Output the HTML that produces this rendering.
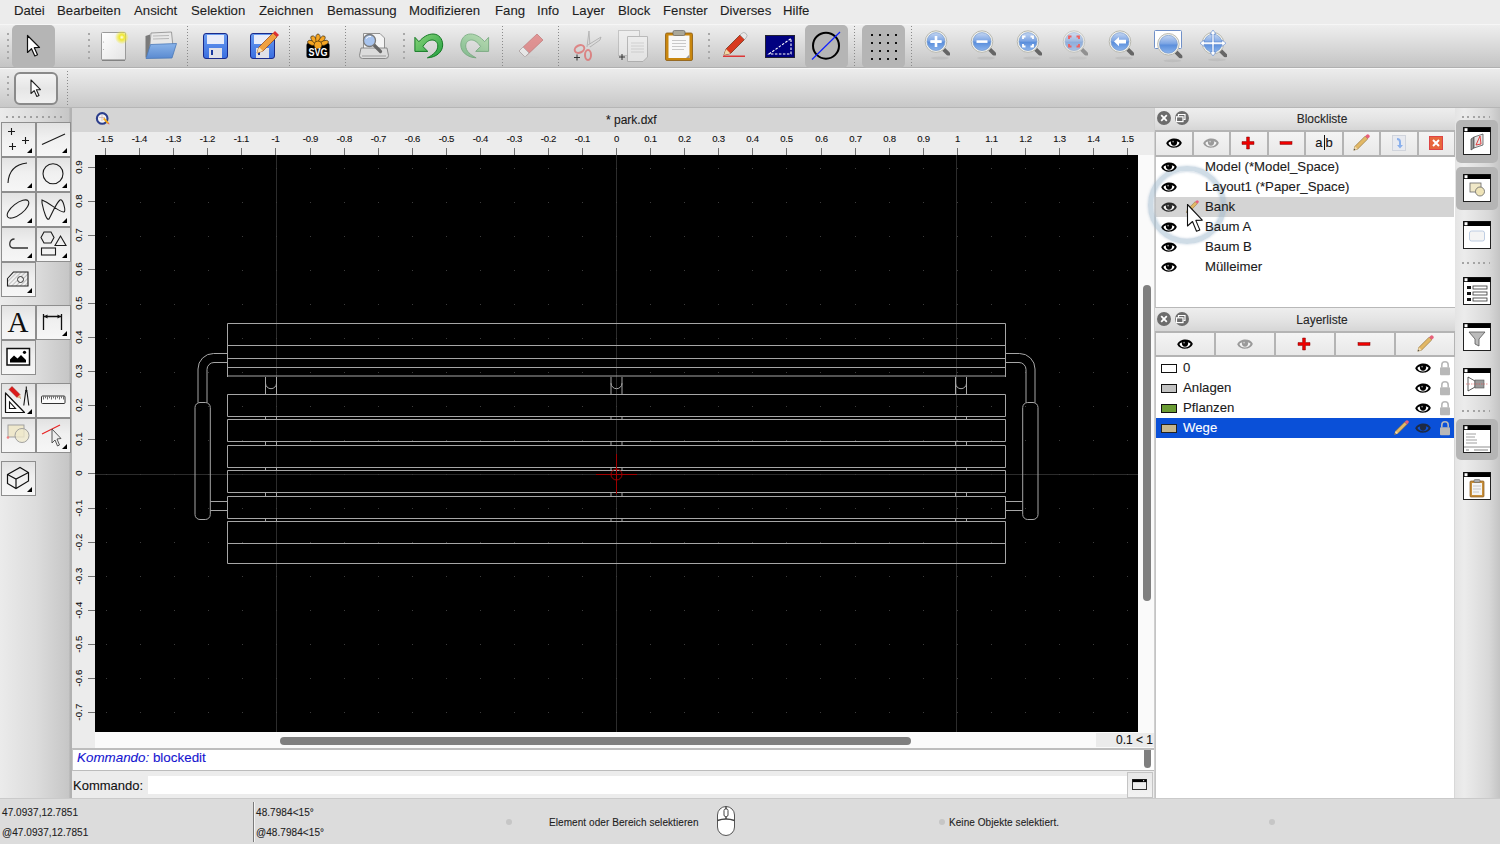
<!DOCTYPE html>
<html><head><meta charset="utf-8">
<style>
*{margin:0;padding:0;box-sizing:border-box}
html,body{width:1500px;height:844px;overflow:hidden;background:#ececec;font-family:"Liberation Sans",sans-serif;color:#222}
.a{position:absolute}
svg.a{overflow:visible}
#menu{left:0;top:0;width:1500px;height:24px;background:#ececec}
#menu span{position:absolute;top:3px;font-size:13.2px;color:#1e1e1e;line-height:15px}
#tb1{left:0;top:24px;width:1500px;height:44px;background:linear-gradient(#eeeeee,#e2e2e2 30%,#c4c4c4);border-top:1px solid #f6f6f6;border-bottom:1px solid #b0b0b0}
#tb2{left:0;top:68px;width:1500px;height:40px;background:linear-gradient(#ececec,#dedede 40%,#c8c8c8);border-top:1px solid #f8f8f8;border-bottom:1px solid #b6b6b6}
#tbox{left:0;top:108px;width:72px;height:690px;background:linear-gradient(90deg,#ebebeb,#dcdcdc 50%,#c6c6c6 96%,#b2b2b2 97%,#b2b2b2)}
#title{left:72px;top:108px;width:1082px;height:24px;background:#d5d5d5}
#title span{position:absolute;left:534px;top:5px;font-size:12px;color:#1a1a1a}
#rtop{left:72px;top:132px;width:1082px;height:23px;background:#ececec}
#rleft{left:72px;top:155px;width:23px;height:593px;background:#ececec}
#vsb{left:1138px;top:155px;width:17px;height:593px;background:#fafafa}
#hsb{left:95px;top:732px;width:1060px;height:16px;background:#fafafa}
#hist{left:72px;top:748px;width:1082px;height:23px;background:#fff;border-top:2px solid #bdbdbd;border-left:1px solid #c8c8c8;border-bottom:1px solid #bcbcbc}
#cmd{left:72px;top:771px;width:1083px;height:27px;background:#ececec}
#status{left:0;top:798px;width:1500px;height:46px;background:#dcdcdc;border-top:1px solid #cacaca}
#dock{left:1154px;top:108px;width:302px;height:690px;background:#ececec;border-left:1px solid #cfcfcf}
#rtb{left:1455px;top:108px;width:45px;height:690px;background:linear-gradient(90deg,#e4e4e4,#ececec 20%,#d8d8d8 75%,#c4c4c4)}
.tk{background:#707070}
.rl{font-size:9.6px;color:#111;text-align:center;line-height:10px;letter-spacing:-0.3px}
.rv{letter-spacing:0.1px}
.rv{transform:rotate(-90deg)}
.dots{border-left:2px dotted #9a9a9a}
.hdots{border-top:2px dotted #9a9a9a}
.sep{border-left:1px dotted #8a8a8a}
.tbb{background:#b5b5b5;border-radius:5px}
.bt{background:linear-gradient(#e2e2e2,#f0f0f0 45%,#f6f6f6);border:1px solid #8e8e8e}
.ptitle{background:linear-gradient(#eeeeee,#e4e4e4 50%,#d6d6d6)}
.pt{font-size:12px;color:#262626;text-align:center}
.cb{width:14px;height:14px;border-radius:7px;background:#6c6c6c}
.pb{background:linear-gradient(#f4f4f4,#e8e8e8);border:2px solid #b4b4b4;border-right-width:1px;border-left-width:1px}
.li{font-size:13.2px;color:#1a1a1a;line-height:16px}
.st{font-size:10px;color:#1e1e1e;line-height:12px;letter-spacing:0.07px}
body *{-webkit-text-stroke:0.1px currentColor}
</style></head><body>
<div id="menu" class="a">
<span style="left:14px">Datei</span><span style="left:57px">Bearbeiten</span><span style="left:134px">Ansicht</span><span style="left:191px">Selektion</span><span style="left:259px">Zeichnen</span><span style="left:327px">Bemassung</span><span style="left:409px">Modifizieren</span><span style="left:495px">Fang</span><span style="left:537px">Info</span><span style="left:572px">Layer</span><span style="left:618px">Block</span><span style="left:663px">Fenster</span><span style="left:720px">Diverses</span><span style="left:783px">Hilfe</span>
</div>
<div id="tb1" class="a"></div>
<div class="a" style="left:7px;top:33px;width:2px;height:26px;background:repeating-linear-gradient(#a8a8a8 0 2px,transparent 2px 6px)"></div>
<div class="a tbb" style="left:12px;top:25px;width:43px;height:43px"></div>
<div class="a" style="left:88px;top:33px;width:2px;height:26px;background:repeating-linear-gradient(#a8a8a8 0 2px,transparent 2px 6px)"></div>
<div class="a" style="left:187px;top:26px;width:1px;height:40px;background:repeating-linear-gradient(#8a8a8a 0 1px,transparent 1px 3px)"></div>
<div class="a" style="left:289px;top:26px;width:1px;height:40px;background:repeating-linear-gradient(#8a8a8a 0 1px,transparent 1px 3px)"></div>
<div class="a" style="left:345px;top:26px;width:1px;height:40px;background:repeating-linear-gradient(#8a8a8a 0 1px,transparent 1px 3px)"></div>
<div class="a" style="left:403px;top:33px;width:2px;height:26px;background:repeating-linear-gradient(#a8a8a8 0 2px,transparent 2px 6px)"></div>
<div class="a" style="left:502px;top:26px;width:1px;height:40px;background:repeating-linear-gradient(#8a8a8a 0 1px,transparent 1px 3px)"></div>
<div class="a" style="left:558px;top:26px;width:1px;height:40px;background:repeating-linear-gradient(#8a8a8a 0 1px,transparent 1px 3px)"></div>
<div class="a" style="left:708px;top:33px;width:2px;height:26px;background:repeating-linear-gradient(#a8a8a8 0 2px,transparent 2px 6px)"></div>
<div class="a" style="left:854px;top:26px;width:1px;height:40px;background:repeating-linear-gradient(#8a8a8a 0 1px,transparent 1px 3px)"></div>
<div class="a" style="left:911px;top:26px;width:1px;height:40px;background:repeating-linear-gradient(#8a8a8a 0 1px,transparent 1px 3px)"></div>
<div class="a tbb" style="left:805px;top:25px;width:43px;height:43px"></div>
<div class="a tbb" style="left:862px;top:25px;width:43px;height:43px"></div>
<svg class="a" style="left:0;top:0" width="1260" height="108" viewBox="0 0 1260 108">
<defs>
<linearGradient id="lens" x1="0" y1="0" x2="0" y2="1"><stop offset="0" stop-color="#c4d6f2"/><stop offset="0.45" stop-color="#7ea6e4"/><stop offset="0.55" stop-color="#5b8fdc"/><stop offset="1" stop-color="#8cb4ec"/></linearGradient>
<linearGradient id="flop" x1="0" y1="0" x2="0" y2="1"><stop offset="0" stop-color="#6a9cf0"/><stop offset="1" stop-color="#3a6ee0"/></linearGradient>
<radialGradient id="glow"><stop offset="0" stop-color="#fffff0"/><stop offset="0.35" stop-color="#f0e830"/><stop offset="1" stop-color="#f0e830" stop-opacity="0"/></radialGradient>
<linearGradient id="grn" x1="0" y1="0" x2="1" y2="1"><stop offset="0" stop-color="#8ad47a"/><stop offset="1" stop-color="#22a040"/></linearGradient>
<symbol id="mag" viewBox="-14 -14 28 28">
<path d="M7 7 L12.5 12.5" stroke="#666" stroke-width="4" stroke-linecap="round"/>
<circle cx="0" cy="0" r="10.8" fill="#f4f4ee" stroke="#b8b8b0" stroke-width="1"/>
<circle cx="0" cy="0" r="9" fill="url(#lens)" stroke="#6c90c8" stroke-width="0.6"/>
</symbol>
</defs>
<path transform="translate(27.5,35.5)" d="M0 0 L0 17 L4 13.2 L7.3 20.5 L10 19.3 L6.8 12.2 L12 12 Z" fill="#fff" stroke="#111" stroke-width="1.2" stroke-linejoin="round"/>
<defs><linearGradient id="paper" x1="0" y1="0" x2="1" y2="1"><stop offset="0" stop-color="#ffffff"/><stop offset="1" stop-color="#e4e4e4"/></linearGradient></defs>
<rect x="101.5" y="32.5" width="24" height="27.5" rx="1" fill="url(#paper)" stroke="#9a9a9a" stroke-width="1"/><line x1="102" y1="60.3" x2="125" y2="60.3" stroke="#777" stroke-width="1"/>
<circle cx="103.5" cy="42" r="0.6" fill="#aaa"/><circle cx="103.5" cy="49.5" r="0.6" fill="#aaa"/>
<circle cx="121.8" cy="37.3" r="7" fill="url(#glow)"/>
<path d="M145.5 36 L150 34.5 L150 56 L145.5 57.5Z" fill="#7a7a7a"/>
<path d="M151 33 L171.5 32 L173 47 L149.5 50Z" fill="#e8e8e8" stroke="#8a8a8a" stroke-width="0.8"/>
<g stroke="#aaa" stroke-width="0.8"><line x1="153" y1="36" x2="169" y2="35.5"/><line x1="153" y1="39" x2="169" y2="38.5"/></g>
<defs><linearGradient id="fold" x1="0" y1="0" x2="0" y2="1"><stop offset="0" stop-color="#8ab4ea"/><stop offset="1" stop-color="#5a8ad0"/></linearGradient></defs>
<path d="M150.5 44.5 L176.5 43.5 L172 58 L146 58.5Z" fill="url(#fold)" stroke="#4a78b8" stroke-width="0.8"/>
<rect x="203.5" y="33.5" width="24" height="25" rx="2.5" fill="url(#flop)" stroke="#1a2a8a" stroke-width="1"/><rect x="207" y="35" width="17" height="9" fill="#e8ecfa"/><rect x="209" y="48" width="13" height="10" fill="#e0e0e8"/><rect x="211" y="50" width="2" height="5" fill="#1a3aa0"/>
<rect x="250.5" y="33.5" width="24" height="25" rx="2.5" fill="url(#flop)" stroke="#1a2a8a" stroke-width="1"/><rect x="254" y="35" width="17" height="9" fill="#e8ecfa"/><rect x="256" y="48" width="13" height="10" fill="#e0e0e8"/><rect x="258" y="50" width="2" height="5" fill="#1a3aa0"/>
<path d="M257 53 L259 47 L273 33 L277 37 L263 51Z" fill="#f0a040" stroke="#904010" stroke-width="0.7"/><path d="M273 33 L275 31 L279 35 L277 37Z" fill="#e03030"/><path d="M257 53 L259 47 L263 51Z" fill="#f8e0b0"/>
<path d="M306.5 45 Q306.5 43 308.5 43 L327.5 43 Q329.5 43 329.5 45 L329.5 56 Q329.5 58 327.5 58 L308.5 58 Q306.5 58 306.5 56Z" fill="#000"/>
<g fill="#f6a623" stroke="#000" stroke-width="0.5"><ellipse cx="318" cy="38.5" rx="2.3" ry="4.5" transform="rotate(-72 318 45)"/><ellipse cx="318" cy="38.5" rx="2.3" ry="4.5" transform="rotate(-36 318 45)"/><ellipse cx="318" cy="38.5" rx="2.3" ry="4.5" transform="rotate(0 318 45)"/><ellipse cx="318" cy="38.5" rx="2.3" ry="4.5" transform="rotate(36 318 45)"/><ellipse cx="318" cy="38.5" rx="2.3" ry="4.5" transform="rotate(72 318 45)"/><circle cx="318" cy="45" r="4"/></g>
<text x="318" y="55.5" font-family="Liberation Sans" font-weight="bold" font-size="11" text-anchor="middle" fill="#fff" textLength="19" lengthAdjust="spacingAndGlyphs">SVG</text>
<path d="M363.5 33.5 L380 33.5 L384.5 38 L384.5 49 L363.5 49Z" fill="#f4f4f4" stroke="#888" stroke-width="0.9"/>
<path d="M361 48 L387 48 L388.5 55.5 Q388.5 58.5 385.5 58.5 L362.5 58.5 Q359.5 58.5 359.5 55.5Z" fill="#dcdcdc" stroke="#808080" stroke-width="0.9"/><rect x="362" y="55" width="24" height="2" fill="#bbb"/>
<path d="M373 44 L380.5 51.5" stroke="#666" stroke-width="3.2" stroke-linecap="round"/><circle cx="369.5" cy="40.5" r="6" fill="#a8c4ee" stroke="#7a7a7a" stroke-width="1.3"/><path d="M366 38.5 Q368 36 371 36.5" stroke="#fff" stroke-width="1" fill="none"/>
<path d="M414.9 37.3 L418.9 41.7 C423 37 428 34 433 34 C439 34 442.7 39 442.7 45 C442.7 52 436 57.5 427.4 57.8 C433 55 437.8 51 437.8 46 C437.8 42 435 40 432 40 C429 40 426 42 422.9 46.5 L427.8 51.4 L414.9 51.4 Z" fill="url(#grn)" stroke="#157a25" stroke-width="1"/>
<path d="M414.9 37.3 L418.9 41.7 C423 37 428 34 433 34 C439 34 442.7 39 442.7 45 C442.7 52 436 57.5 427.4 57.8 C433 55 437.8 51 437.8 46 C437.8 42 435 40 432 40 C429 40 426 42 422.9 46.5 L427.8 51.4 L414.9 51.4 Z" fill="url(#grn)" stroke="#157a25" stroke-width="1" opacity="0.45" transform="translate(903.5,0) scale(-1,1)"/>
<g opacity="0.6"><path d="M519 51 L537 34 L543 40 L525 57Z" fill="#e06060" stroke="#b04040" stroke-width="0.8"/><path d="M522 48 L540 31" stroke="#fff" stroke-width="2" opacity="0"/><path d="M519 51 L523 47 L529 53 L525 57Z" fill="#f4f4f4" stroke="#888" stroke-width="0.7"/><ellipse cx="530" cy="57.5" rx="9" ry="1.2" fill="#ccc"/></g>
<g opacity="0.6"><path d="M587 47 L589 31 L590 47" fill="#ddd" stroke="#888" stroke-width="0.8"/><path d="M588 45 L601 37 L600 40 L590 47" fill="#ddd" stroke="#888" stroke-width="0.8"/><ellipse cx="579.5" cy="49" rx="5" ry="3.6" fill="none" stroke="#e05050" stroke-width="2" transform="rotate(-25 579.5 49)"/><ellipse cx="588" cy="55" rx="3" ry="5" fill="none" stroke="#e05050" stroke-width="2"/></g>
<path d="M574 57.5 H580 M577 54.5 V60.5" stroke="#333" stroke-width="1"/>
<g opacity="0.55"><rect x="618.5" y="30.5" width="21" height="25" fill="#f4f4f4" stroke="#aaa"/><path d="M627.5 36.5 L647.5 36.5 L647.5 57 L643 61.5 L627.5 61.5Z" fill="#f6f6f6" stroke="#999"/><g stroke="#bbb" stroke-width="0.8"><line x1="631" y1="43" x2="644" y2="43"/><line x1="631" y1="46" x2="644" y2="46"/><line x1="631" y1="49" x2="644" y2="49"/><line x1="631" y1="52" x2="644" y2="52"/></g></g>
<path d="M619 57 H625 M622 54 V60" stroke="#333" stroke-width="1"/>
<rect x="665.5" y="33" width="27" height="27.5" rx="1.5" fill="#c8860e" stroke="#8a5a10" stroke-width="0.8"/><rect x="668.5" y="35.5" width="21" height="22.5" fill="#f8f8f8"/><path d="M686 58 L689.5 54.5 L689.5 58Z" fill="#999"/>
<rect x="673" y="30.5" width="12" height="5" rx="1.5" fill="#aaa89a" stroke="#666" stroke-width="0.7"/>
<g stroke="#bbb" stroke-width="0.8"><line x1="672" y1="40.5" x2="686" y2="40.5"/><line x1="672" y1="43.5" x2="686" y2="43.5"/><line x1="672" y1="46.5" x2="686" y2="46.5"/><line x1="672" y1="49.5" x2="684" y2="49.5"/></g>
<path d="M724 55 L726 49 L740 35 L744.5 39.5 L730.5 53.5Z" fill="#d83a20" stroke="#6a2a10" stroke-width="0.7"/><path d="M740 35 L741.5 33.5 A2.5 2.5 0 0 1 746 38 L744.5 39.5Z" fill="#e8e8e8" stroke="#888" stroke-width="0.5"/><path d="M724 55 L726 49 L730.5 53.5Z" fill="#f0d8a8"/><path d="M723 56.2 H745" stroke="#e01010" stroke-width="1.2"/>
<rect x="765.5" y="35.5" width="29" height="22" fill="#000080" stroke="#223" stroke-width="1"/><path d="M769 54 L791 38.5 L791 54Z" fill="none" stroke="#fff" stroke-width="1.1" stroke-dasharray="2.5 1.5"/>
<circle cx="826" cy="45.7" r="13" fill="none" stroke="#000" stroke-width="2"/><line x1="812" y1="59.5" x2="840" y2="32" stroke="#1020ff" stroke-width="1.2"/>
<g fill="#111"><rect x="871" y="34" width="2" height="2"/><rect x="871" y="42" width="2" height="2"/><rect x="871" y="50" width="2" height="2"/><rect x="871" y="58" width="2" height="2"/><rect x="879" y="34" width="2" height="2"/><rect x="879" y="42" width="2" height="2"/><rect x="879" y="50" width="2" height="2"/><rect x="879" y="58" width="2" height="2"/><rect x="887" y="34" width="2" height="2"/><rect x="887" y="42" width="2" height="2"/><rect x="887" y="50" width="2" height="2"/><rect x="887" y="58" width="2" height="2"/><rect x="895" y="34" width="2" height="2"/><rect x="895" y="42" width="2" height="2"/><rect x="895" y="50" width="2" height="2"/><rect x="895" y="58" width="2" height="2"/></g>
<ellipse cx="940" cy="58.1" rx="9" ry="1.5" fill="#000" opacity="0.06"/>
<use href="#mag" x="922" y="27.6" width="28" height="28"/>
<path d="M936 36 V47 M930.5 41.6 H941.5" stroke="#fff" stroke-width="2.6"/><path d="M936 36 V47 M930.5 41.6 H941.5" stroke="#fff" stroke-width="2"/>
<ellipse cx="986" cy="58.1" rx="9" ry="1.5" fill="#000" opacity="0.06"/>
<use href="#mag" x="968" y="27.6" width="28" height="28"/>
<path d="M976.5 41.6 H987.5" stroke="#fff" stroke-width="2.6"/>
<ellipse cx="1032" cy="58.1" rx="9" ry="1.5" fill="#000" opacity="0.06"/>
<use href="#mag" x="1014" y="27.6" width="28" height="28"/>
<path d="M1023 39 V36.5 H1025.5 M1030.5 36.5 H1033 V39 M1033 44 V46.5 H1030.5 M1025.5 46.5 H1023 V44" stroke="#fff" stroke-width="1.8" fill="none"/>
<g opacity="0.6">
<ellipse cx="1078" cy="58.1" rx="9" ry="1.5" fill="#000" opacity="0.06"/>
<use href="#mag" x="1060" y="27.6" width="28" height="28"/>
</g><path d="M1069 39 V36.5 H1071.5 M1076.5 36.5 H1079 V39 M1079 44 V46.5 H1076.5 M1071.5 46.5 H1069 V44" stroke="#f06060" stroke-width="1.8" fill="none"/>
<ellipse cx="1124" cy="58.1" rx="9" ry="1.5" fill="#000" opacity="0.06"/>
<use href="#mag" x="1106" y="27.6" width="28" height="28"/>
<path d="M1114 41.6 L1119 37 L1119 39.8 L1126 39.8 L1126 43.4 L1119 43.4 L1119 46.2Z" fill="#fff"/>
<rect x="1154.5" y="30.5" width="27" height="18" rx="1" fill="#fff" stroke="#7090c8" stroke-width="1"/>
<ellipse cx="1172.4" cy="60.8" rx="9" ry="1.5" fill="#000" opacity="0.06"/>
<use href="#mag" x="1154.4" y="30.299999999999997" width="28" height="28"/>
<ellipse cx="1217" cy="59.7" rx="9" ry="1.5" fill="#000" opacity="0.06"/>
<use href="#mag" x="1199" y="29.200000000000003" width="28" height="28"/>
<path d="M1213 30 L1216 34 L1214 34 L1214 42 L1222 42 L1222 40 L1226 43.2 L1222 46.4 L1222 44.4 L1214 44.4 L1214 52 L1216 52 L1213 56 L1210 52 L1212 52 L1212 44.4 L1204 44.4 L1204 46.4 L1200 43.2 L1204 40 L1204 42 L1212 42 L1212 34 L1210 34Z" fill="#fff" stroke="#5a86d0" stroke-width="0.6"/>
</svg>
<div id="tb2" class="a"></div>
<div class="a" style="left:7px;top:76px;width:2px;height:24px;background:repeating-linear-gradient(#a8a8a8 0 2px,transparent 2px 6px)"></div>
<div class="a" style="left:14px;top:72px;width:44px;height:33px;border:2px solid #8a8a8a;border-radius:6px;background:linear-gradient(#f4f4f4,#e6e6e6 50%,#f0f0f0)"></div>
<svg class="a" style="left:30px;top:79px" width="14" height="22" viewBox="0 0 14 22"><path d="M1 1 L1 14.5 L4.2 11.6 L6.8 17.5 L9 16.5 L6.4 10.8 L10.5 10.6Z" fill="#fff" stroke="#222" stroke-width="1.1" stroke-linejoin="round"/></svg>
<div class="a" style="left:67px;top:71px;width:1px;height:35px;background:repeating-linear-gradient(#8a8a8a 0 1px,transparent 1px 3px)"></div>
<div id="tbox" class="a"></div>
<div class="a" style="left:6px;top:116px;width:58px;height:2px;background:repeating-linear-gradient(90deg,#a0a0a0 0 2px,transparent 2px 6px)"></div>
<div class="a bt" style="left:1px;top:122px;width:35px;height:35px"></div>
<div class="a bt" style="left:36px;top:122px;width:35px;height:35px"></div>
<div class="a bt" style="left:1px;top:157px;width:35px;height:35px"></div>
<div class="a bt" style="left:36px;top:157px;width:35px;height:35px"></div>
<div class="a bt" style="left:1px;top:192px;width:35px;height:35px"></div>
<div class="a bt" style="left:36px;top:192px;width:35px;height:35px"></div>
<div class="a bt" style="left:1px;top:227px;width:35px;height:35px"></div>
<div class="a bt" style="left:36px;top:227px;width:35px;height:35px"></div>
<div class="a bt" style="left:1px;top:262px;width:35px;height:35px"></div>
<div class="a bt" style="left:1px;top:305px;width:35px;height:35px"></div>
<div class="a bt" style="left:36px;top:305px;width:35px;height:35px"></div>
<div class="a bt" style="left:1px;top:340px;width:35px;height:35px"></div>
<div class="a bt" style="left:1px;top:383px;width:35px;height:35px"></div>
<div class="a bt" style="left:36px;top:383px;width:35px;height:35px"></div>
<div class="a bt" style="left:1px;top:418px;width:35px;height:35px"></div>
<div class="a bt" style="left:36px;top:418px;width:35px;height:35px"></div>
<div class="a bt" style="left:1px;top:461px;width:35px;height:35px"></div>
<svg class="a" style="left:0;top:0" width="72" height="500" viewBox="0 0 72 500">
<g fill="none" stroke="#1a1a1a" stroke-width="1.1">
<path d="M8.0 131.5H15.0M11.5 128.0V135.0"/>
<path d="M22.0 140.5H29.0M25.5 137.0V144.0"/>
<path d="M9.0 146.5H16.0M12.5 143.0V150.0"/>
<path d="M42 144.5 L65 134"/>
<path d="M8 183 Q9 165 27 163"/>
<circle cx="53" cy="173.8" r="10"/>
<ellipse cx="18" cy="209" rx="13" ry="5.5" transform="rotate(-38 18 209)"/>
<path d="M42 203 C44 213 47 221 49 219 C53 212 56 203 60 200 C63 198 66 211 64 212 C60 213 50 203 42 200 Z" />
<path d="M14.5 239 C9 239 8 247 13 248 L28 248" stroke="#333" stroke-width="1.3"/>
<path d="M41 237.5 L44 232 L51 232 L54 237.5 L51 243 L44 243Z"/>
<path d="M55 245.5 L60.5 236 L66 245.5Z"/>
<rect x="41.5" y="248" width="14" height="7"/>
</g>
<defs><pattern id="hp" width="3" height="3" patternUnits="userSpaceOnUse" patternTransform="rotate(45)"><line x1="0" y1="0" x2="0" y2="3" stroke="#777" stroke-width="0.8"/></pattern></defs>
<path d="M7.5 278.5 L13.5 272 L28 272 L28 286 L7.5 286Z" fill="url(#hp)" stroke="#222" stroke-width="1.1"/>
<circle cx="20.5" cy="279.5" r="3" fill="#eee" stroke="#222" stroke-width="0.9"/>
<text x="18" y="332.3" font-family="Liberation Serif" font-size="29" text-anchor="middle" fill="#111">A</text>
<g stroke="#111" stroke-width="1.3" fill="none"><path d="M43.5 314 V330 M61.5 314 V330 M44 316.5 H61"/></g>
<path d="M44 316.5 L47.5 314.5 L47.5 318.5Z M61 316.5 L57.5 314.5 L57.5 318.5Z" fill="#111"/>
<rect x="7" y="348.5" width="22.5" height="16.5" fill="#fff" stroke="#111" stroke-width="1.5"/>
<path d="M10 362.5 L10 359.5 L14 355.5 L17.5 358.5 L21 355 L26 360 L26 362.5Z" fill="#000"/><circle cx="24.5" cy="352.3" r="1.6" fill="#000"/>
<path d="M5.5 393 L5.5 412.5 L24.5 412.5Z" fill="#fff" stroke="#111" stroke-width="1.2" stroke-linejoin="round"/><path d="M9.5 402 L9.5 408.5 L15.5 408.5Z" fill="none" stroke="#111" stroke-width="1.1"/>
<path d="M9 389.5 L12 386.5 L20 394.5 L17 397.5Z" fill="#dd1a1a" stroke="#8a1a10" stroke-width="0.5"/><path d="M17 397.5 L20 394.5 L21 398.5Z" fill="#e0b080"/><path d="M20.3 397.8 L21 398.5 L20 398.2Z" fill="#222"/>
<path d="M26.3 386.5 V390 M25.6 392 L23.8 405.5 M27 392 L28.8 405.5" stroke="#111" stroke-width="1.1" fill="none"/><circle cx="26.3" cy="391" r="1.3" fill="#111"/>
<rect x="41.5" y="396" width="23.5" height="7.5" rx="1" fill="#fafafa" stroke="#333" stroke-width="1"/>
<g stroke="#333" stroke-width="0.7"><line x1="43.5" y1="396.5" x2="43.5" y2="399.5"/><line x1="45.5" y1="396.5" x2="45.5" y2="398.3"/><line x1="47.5" y1="396.5" x2="47.5" y2="399.5"/><line x1="49.5" y1="396.5" x2="49.5" y2="398.3"/><line x1="51.5" y1="396.5" x2="51.5" y2="399.5"/><line x1="53.5" y1="396.5" x2="53.5" y2="398.3"/><line x1="55.5" y1="396.5" x2="55.5" y2="399.5"/><line x1="57.5" y1="396.5" x2="57.5" y2="398.3"/><line x1="59.5" y1="396.5" x2="59.5" y2="399.5"/><line x1="61.5" y1="396.5" x2="61.5" y2="398.3"/><line x1="63.5" y1="396.5" x2="63.5" y2="399.5"/></g>
<rect x="8" y="425" width="16" height="12" fill="#efe8cc" stroke="#999" stroke-width="0.9"/>
<circle cx="22" cy="435.5" r="7" fill="#efe8cc" fill-opacity="0.8" stroke="#999" stroke-width="0.9"/>
<circle cx="8" cy="437.5" r="1.3" fill="#f08080"/>
<line x1="42" y1="434" x2="60" y2="425" stroke="#e82020" stroke-width="1.2"/>
<path d="M52 429 L52 443 L55 440 L57.5 446 L59.5 445 L57 439 L61 438.5Z" fill="#eee" stroke="#444" stroke-width="0.9"/>
<g fill="none" stroke="#111" stroke-width="1.2"><path d="M7.5 474.5 L20 467.5 L28.5 472.5 L28.5 481 L16 488.5 L7.5 483.5Z M7.5 474.5 L16 479 L28.5 472.5 M16 479 V488.5"/></g>
<path d="M27 153 L32 153 L32 148Z" fill="#000"/>
<path d="M62 153 L67 153 L67 148Z" fill="#000"/>
<path d="M27 188 L32 188 L32 183Z" fill="#000"/>
<path d="M62 188 L67 188 L67 183Z" fill="#000"/>
<path d="M27 223 L32 223 L32 218Z" fill="#000"/>
<path d="M62 223 L67 223 L67 218Z" fill="#000"/>
<path d="M27 258 L32 258 L32 253Z" fill="#000"/>
<path d="M62 258 L67 258 L67 253Z" fill="#000"/>
<path d="M27 293 L32 293 L32 288Z" fill="#000"/>
<path d="M62 336 L67 336 L67 331Z" fill="#000"/>
<path d="M27 414 L32 414 L32 409Z" fill="#000"/>
<path d="M62 449 L67 449 L67 444Z" fill="#000"/>
<path d="M27 492 L32 492 L32 487Z" fill="#000"/>
</svg>
<div id="title" class="a"><span>* park.dxf</span></div>
<svg class="a" style="left:94px;top:110px" width="18" height="18" viewBox="94 110 18 18">
<circle cx="102.2" cy="118.4" r="5.3" fill="#f4f4f4" stroke="#2c3e8c" stroke-width="2.1"/>
<path d="M99 117.5 H105 M102 115 V121" stroke="#c8a0a0" stroke-width="0.6"/>
<path d="M103 119 L104.5 117.8 L108.8 122.6 L107.3 123.8Z" fill="#f4a818"/>
<path d="M107.3 123.8 L108.8 122.6 L109.6 124.6Z" fill="#e06868"/>
</svg>

<div id="rtop" class="a"></div>
<div id="rleft" class="a"></div>
<div id="vsb" class="a"></div>
<div id="hsb" class="a"></div>
<svg class="a" style="left:95px;top:155px" width="1043" height="577" viewBox="95 155 1043 577">
<rect x="95" y="155" width="1043" height="577" fill="#000"/>
<g stroke="#2c2c2c" stroke-width="1" shape-rendering="crispEdges">
<line x1="276.5" y1="155" x2="276.5" y2="732"/>
<line x1="616.5" y1="155" x2="616.5" y2="732"/>
<line x1="956.5" y1="155" x2="956.5" y2="732"/>
<line x1="95" y1="474.5" x2="1138" y2="474.5"/>
</g>
<g fill="#3c3c3c">
<rect x="106" y="168" width="1" height="1"/>
<rect x="106" y="202" width="1" height="1"/>
<rect x="106" y="236" width="1" height="1"/>
<rect x="106" y="270" width="1" height="1"/>
<rect x="106" y="304" width="1" height="1"/>
<rect x="106" y="338" width="1" height="1"/>
<rect x="106" y="372" width="1" height="1"/>
<rect x="106" y="406" width="1" height="1"/>
<rect x="106" y="440" width="1" height="1"/>
<rect x="106" y="474" width="1" height="1"/>
<rect x="106" y="508" width="1" height="1"/>
<rect x="106" y="542" width="1" height="1"/>
<rect x="106" y="576" width="1" height="1"/>
<rect x="106" y="610" width="1" height="1"/>
<rect x="106" y="644" width="1" height="1"/>
<rect x="106" y="678" width="1" height="1"/>
<rect x="106" y="712" width="1" height="1"/>
<rect x="140" y="168" width="1" height="1"/>
<rect x="140" y="202" width="1" height="1"/>
<rect x="140" y="236" width="1" height="1"/>
<rect x="140" y="270" width="1" height="1"/>
<rect x="140" y="304" width="1" height="1"/>
<rect x="140" y="338" width="1" height="1"/>
<rect x="140" y="372" width="1" height="1"/>
<rect x="140" y="406" width="1" height="1"/>
<rect x="140" y="440" width="1" height="1"/>
<rect x="140" y="474" width="1" height="1"/>
<rect x="140" y="508" width="1" height="1"/>
<rect x="140" y="542" width="1" height="1"/>
<rect x="140" y="576" width="1" height="1"/>
<rect x="140" y="610" width="1" height="1"/>
<rect x="140" y="644" width="1" height="1"/>
<rect x="140" y="678" width="1" height="1"/>
<rect x="140" y="712" width="1" height="1"/>
<rect x="174" y="168" width="1" height="1"/>
<rect x="174" y="202" width="1" height="1"/>
<rect x="174" y="236" width="1" height="1"/>
<rect x="174" y="270" width="1" height="1"/>
<rect x="174" y="304" width="1" height="1"/>
<rect x="174" y="338" width="1" height="1"/>
<rect x="174" y="372" width="1" height="1"/>
<rect x="174" y="406" width="1" height="1"/>
<rect x="174" y="440" width="1" height="1"/>
<rect x="174" y="474" width="1" height="1"/>
<rect x="174" y="508" width="1" height="1"/>
<rect x="174" y="542" width="1" height="1"/>
<rect x="174" y="576" width="1" height="1"/>
<rect x="174" y="610" width="1" height="1"/>
<rect x="174" y="644" width="1" height="1"/>
<rect x="174" y="678" width="1" height="1"/>
<rect x="174" y="712" width="1" height="1"/>
<rect x="208" y="168" width="1" height="1"/>
<rect x="208" y="202" width="1" height="1"/>
<rect x="208" y="236" width="1" height="1"/>
<rect x="208" y="270" width="1" height="1"/>
<rect x="208" y="304" width="1" height="1"/>
<rect x="208" y="338" width="1" height="1"/>
<rect x="208" y="372" width="1" height="1"/>
<rect x="208" y="406" width="1" height="1"/>
<rect x="208" y="440" width="1" height="1"/>
<rect x="208" y="474" width="1" height="1"/>
<rect x="208" y="508" width="1" height="1"/>
<rect x="208" y="542" width="1" height="1"/>
<rect x="208" y="576" width="1" height="1"/>
<rect x="208" y="610" width="1" height="1"/>
<rect x="208" y="644" width="1" height="1"/>
<rect x="208" y="678" width="1" height="1"/>
<rect x="208" y="712" width="1" height="1"/>
<rect x="242" y="168" width="1" height="1"/>
<rect x="242" y="202" width="1" height="1"/>
<rect x="242" y="236" width="1" height="1"/>
<rect x="242" y="270" width="1" height="1"/>
<rect x="242" y="304" width="1" height="1"/>
<rect x="242" y="338" width="1" height="1"/>
<rect x="242" y="372" width="1" height="1"/>
<rect x="242" y="406" width="1" height="1"/>
<rect x="242" y="440" width="1" height="1"/>
<rect x="242" y="474" width="1" height="1"/>
<rect x="242" y="508" width="1" height="1"/>
<rect x="242" y="542" width="1" height="1"/>
<rect x="242" y="576" width="1" height="1"/>
<rect x="242" y="610" width="1" height="1"/>
<rect x="242" y="644" width="1" height="1"/>
<rect x="242" y="678" width="1" height="1"/>
<rect x="242" y="712" width="1" height="1"/>
<rect x="276" y="168" width="1" height="1"/>
<rect x="276" y="202" width="1" height="1"/>
<rect x="276" y="236" width="1" height="1"/>
<rect x="276" y="270" width="1" height="1"/>
<rect x="276" y="304" width="1" height="1"/>
<rect x="276" y="338" width="1" height="1"/>
<rect x="276" y="372" width="1" height="1"/>
<rect x="276" y="406" width="1" height="1"/>
<rect x="276" y="440" width="1" height="1"/>
<rect x="276" y="474" width="1" height="1"/>
<rect x="276" y="508" width="1" height="1"/>
<rect x="276" y="542" width="1" height="1"/>
<rect x="276" y="576" width="1" height="1"/>
<rect x="276" y="610" width="1" height="1"/>
<rect x="276" y="644" width="1" height="1"/>
<rect x="276" y="678" width="1" height="1"/>
<rect x="276" y="712" width="1" height="1"/>
<rect x="310" y="168" width="1" height="1"/>
<rect x="310" y="202" width="1" height="1"/>
<rect x="310" y="236" width="1" height="1"/>
<rect x="310" y="270" width="1" height="1"/>
<rect x="310" y="304" width="1" height="1"/>
<rect x="310" y="338" width="1" height="1"/>
<rect x="310" y="372" width="1" height="1"/>
<rect x="310" y="406" width="1" height="1"/>
<rect x="310" y="440" width="1" height="1"/>
<rect x="310" y="474" width="1" height="1"/>
<rect x="310" y="508" width="1" height="1"/>
<rect x="310" y="542" width="1" height="1"/>
<rect x="310" y="576" width="1" height="1"/>
<rect x="310" y="610" width="1" height="1"/>
<rect x="310" y="644" width="1" height="1"/>
<rect x="310" y="678" width="1" height="1"/>
<rect x="310" y="712" width="1" height="1"/>
<rect x="344" y="168" width="1" height="1"/>
<rect x="344" y="202" width="1" height="1"/>
<rect x="344" y="236" width="1" height="1"/>
<rect x="344" y="270" width="1" height="1"/>
<rect x="344" y="304" width="1" height="1"/>
<rect x="344" y="338" width="1" height="1"/>
<rect x="344" y="372" width="1" height="1"/>
<rect x="344" y="406" width="1" height="1"/>
<rect x="344" y="440" width="1" height="1"/>
<rect x="344" y="474" width="1" height="1"/>
<rect x="344" y="508" width="1" height="1"/>
<rect x="344" y="542" width="1" height="1"/>
<rect x="344" y="576" width="1" height="1"/>
<rect x="344" y="610" width="1" height="1"/>
<rect x="344" y="644" width="1" height="1"/>
<rect x="344" y="678" width="1" height="1"/>
<rect x="344" y="712" width="1" height="1"/>
<rect x="378" y="168" width="1" height="1"/>
<rect x="378" y="202" width="1" height="1"/>
<rect x="378" y="236" width="1" height="1"/>
<rect x="378" y="270" width="1" height="1"/>
<rect x="378" y="304" width="1" height="1"/>
<rect x="378" y="338" width="1" height="1"/>
<rect x="378" y="372" width="1" height="1"/>
<rect x="378" y="406" width="1" height="1"/>
<rect x="378" y="440" width="1" height="1"/>
<rect x="378" y="474" width="1" height="1"/>
<rect x="378" y="508" width="1" height="1"/>
<rect x="378" y="542" width="1" height="1"/>
<rect x="378" y="576" width="1" height="1"/>
<rect x="378" y="610" width="1" height="1"/>
<rect x="378" y="644" width="1" height="1"/>
<rect x="378" y="678" width="1" height="1"/>
<rect x="378" y="712" width="1" height="1"/>
<rect x="412" y="168" width="1" height="1"/>
<rect x="412" y="202" width="1" height="1"/>
<rect x="412" y="236" width="1" height="1"/>
<rect x="412" y="270" width="1" height="1"/>
<rect x="412" y="304" width="1" height="1"/>
<rect x="412" y="338" width="1" height="1"/>
<rect x="412" y="372" width="1" height="1"/>
<rect x="412" y="406" width="1" height="1"/>
<rect x="412" y="440" width="1" height="1"/>
<rect x="412" y="474" width="1" height="1"/>
<rect x="412" y="508" width="1" height="1"/>
<rect x="412" y="542" width="1" height="1"/>
<rect x="412" y="576" width="1" height="1"/>
<rect x="412" y="610" width="1" height="1"/>
<rect x="412" y="644" width="1" height="1"/>
<rect x="412" y="678" width="1" height="1"/>
<rect x="412" y="712" width="1" height="1"/>
<rect x="446" y="168" width="1" height="1"/>
<rect x="446" y="202" width="1" height="1"/>
<rect x="446" y="236" width="1" height="1"/>
<rect x="446" y="270" width="1" height="1"/>
<rect x="446" y="304" width="1" height="1"/>
<rect x="446" y="338" width="1" height="1"/>
<rect x="446" y="372" width="1" height="1"/>
<rect x="446" y="406" width="1" height="1"/>
<rect x="446" y="440" width="1" height="1"/>
<rect x="446" y="474" width="1" height="1"/>
<rect x="446" y="508" width="1" height="1"/>
<rect x="446" y="542" width="1" height="1"/>
<rect x="446" y="576" width="1" height="1"/>
<rect x="446" y="610" width="1" height="1"/>
<rect x="446" y="644" width="1" height="1"/>
<rect x="446" y="678" width="1" height="1"/>
<rect x="446" y="712" width="1" height="1"/>
<rect x="480" y="168" width="1" height="1"/>
<rect x="480" y="202" width="1" height="1"/>
<rect x="480" y="236" width="1" height="1"/>
<rect x="480" y="270" width="1" height="1"/>
<rect x="480" y="304" width="1" height="1"/>
<rect x="480" y="338" width="1" height="1"/>
<rect x="480" y="372" width="1" height="1"/>
<rect x="480" y="406" width="1" height="1"/>
<rect x="480" y="440" width="1" height="1"/>
<rect x="480" y="474" width="1" height="1"/>
<rect x="480" y="508" width="1" height="1"/>
<rect x="480" y="542" width="1" height="1"/>
<rect x="480" y="576" width="1" height="1"/>
<rect x="480" y="610" width="1" height="1"/>
<rect x="480" y="644" width="1" height="1"/>
<rect x="480" y="678" width="1" height="1"/>
<rect x="480" y="712" width="1" height="1"/>
<rect x="514" y="168" width="1" height="1"/>
<rect x="514" y="202" width="1" height="1"/>
<rect x="514" y="236" width="1" height="1"/>
<rect x="514" y="270" width="1" height="1"/>
<rect x="514" y="304" width="1" height="1"/>
<rect x="514" y="338" width="1" height="1"/>
<rect x="514" y="372" width="1" height="1"/>
<rect x="514" y="406" width="1" height="1"/>
<rect x="514" y="440" width="1" height="1"/>
<rect x="514" y="474" width="1" height="1"/>
<rect x="514" y="508" width="1" height="1"/>
<rect x="514" y="542" width="1" height="1"/>
<rect x="514" y="576" width="1" height="1"/>
<rect x="514" y="610" width="1" height="1"/>
<rect x="514" y="644" width="1" height="1"/>
<rect x="514" y="678" width="1" height="1"/>
<rect x="514" y="712" width="1" height="1"/>
<rect x="548" y="168" width="1" height="1"/>
<rect x="548" y="202" width="1" height="1"/>
<rect x="548" y="236" width="1" height="1"/>
<rect x="548" y="270" width="1" height="1"/>
<rect x="548" y="304" width="1" height="1"/>
<rect x="548" y="338" width="1" height="1"/>
<rect x="548" y="372" width="1" height="1"/>
<rect x="548" y="406" width="1" height="1"/>
<rect x="548" y="440" width="1" height="1"/>
<rect x="548" y="474" width="1" height="1"/>
<rect x="548" y="508" width="1" height="1"/>
<rect x="548" y="542" width="1" height="1"/>
<rect x="548" y="576" width="1" height="1"/>
<rect x="548" y="610" width="1" height="1"/>
<rect x="548" y="644" width="1" height="1"/>
<rect x="548" y="678" width="1" height="1"/>
<rect x="548" y="712" width="1" height="1"/>
<rect x="582" y="168" width="1" height="1"/>
<rect x="582" y="202" width="1" height="1"/>
<rect x="582" y="236" width="1" height="1"/>
<rect x="582" y="270" width="1" height="1"/>
<rect x="582" y="304" width="1" height="1"/>
<rect x="582" y="338" width="1" height="1"/>
<rect x="582" y="372" width="1" height="1"/>
<rect x="582" y="406" width="1" height="1"/>
<rect x="582" y="440" width="1" height="1"/>
<rect x="582" y="474" width="1" height="1"/>
<rect x="582" y="508" width="1" height="1"/>
<rect x="582" y="542" width="1" height="1"/>
<rect x="582" y="576" width="1" height="1"/>
<rect x="582" y="610" width="1" height="1"/>
<rect x="582" y="644" width="1" height="1"/>
<rect x="582" y="678" width="1" height="1"/>
<rect x="582" y="712" width="1" height="1"/>
<rect x="616" y="168" width="1" height="1"/>
<rect x="616" y="202" width="1" height="1"/>
<rect x="616" y="236" width="1" height="1"/>
<rect x="616" y="270" width="1" height="1"/>
<rect x="616" y="304" width="1" height="1"/>
<rect x="616" y="338" width="1" height="1"/>
<rect x="616" y="372" width="1" height="1"/>
<rect x="616" y="406" width="1" height="1"/>
<rect x="616" y="440" width="1" height="1"/>
<rect x="616" y="474" width="1" height="1"/>
<rect x="616" y="508" width="1" height="1"/>
<rect x="616" y="542" width="1" height="1"/>
<rect x="616" y="576" width="1" height="1"/>
<rect x="616" y="610" width="1" height="1"/>
<rect x="616" y="644" width="1" height="1"/>
<rect x="616" y="678" width="1" height="1"/>
<rect x="616" y="712" width="1" height="1"/>
<rect x="650" y="168" width="1" height="1"/>
<rect x="650" y="202" width="1" height="1"/>
<rect x="650" y="236" width="1" height="1"/>
<rect x="650" y="270" width="1" height="1"/>
<rect x="650" y="304" width="1" height="1"/>
<rect x="650" y="338" width="1" height="1"/>
<rect x="650" y="372" width="1" height="1"/>
<rect x="650" y="406" width="1" height="1"/>
<rect x="650" y="440" width="1" height="1"/>
<rect x="650" y="474" width="1" height="1"/>
<rect x="650" y="508" width="1" height="1"/>
<rect x="650" y="542" width="1" height="1"/>
<rect x="650" y="576" width="1" height="1"/>
<rect x="650" y="610" width="1" height="1"/>
<rect x="650" y="644" width="1" height="1"/>
<rect x="650" y="678" width="1" height="1"/>
<rect x="650" y="712" width="1" height="1"/>
<rect x="684" y="168" width="1" height="1"/>
<rect x="684" y="202" width="1" height="1"/>
<rect x="684" y="236" width="1" height="1"/>
<rect x="684" y="270" width="1" height="1"/>
<rect x="684" y="304" width="1" height="1"/>
<rect x="684" y="338" width="1" height="1"/>
<rect x="684" y="372" width="1" height="1"/>
<rect x="684" y="406" width="1" height="1"/>
<rect x="684" y="440" width="1" height="1"/>
<rect x="684" y="474" width="1" height="1"/>
<rect x="684" y="508" width="1" height="1"/>
<rect x="684" y="542" width="1" height="1"/>
<rect x="684" y="576" width="1" height="1"/>
<rect x="684" y="610" width="1" height="1"/>
<rect x="684" y="644" width="1" height="1"/>
<rect x="684" y="678" width="1" height="1"/>
<rect x="684" y="712" width="1" height="1"/>
<rect x="718" y="168" width="1" height="1"/>
<rect x="718" y="202" width="1" height="1"/>
<rect x="718" y="236" width="1" height="1"/>
<rect x="718" y="270" width="1" height="1"/>
<rect x="718" y="304" width="1" height="1"/>
<rect x="718" y="338" width="1" height="1"/>
<rect x="718" y="372" width="1" height="1"/>
<rect x="718" y="406" width="1" height="1"/>
<rect x="718" y="440" width="1" height="1"/>
<rect x="718" y="474" width="1" height="1"/>
<rect x="718" y="508" width="1" height="1"/>
<rect x="718" y="542" width="1" height="1"/>
<rect x="718" y="576" width="1" height="1"/>
<rect x="718" y="610" width="1" height="1"/>
<rect x="718" y="644" width="1" height="1"/>
<rect x="718" y="678" width="1" height="1"/>
<rect x="718" y="712" width="1" height="1"/>
<rect x="752" y="168" width="1" height="1"/>
<rect x="752" y="202" width="1" height="1"/>
<rect x="752" y="236" width="1" height="1"/>
<rect x="752" y="270" width="1" height="1"/>
<rect x="752" y="304" width="1" height="1"/>
<rect x="752" y="338" width="1" height="1"/>
<rect x="752" y="372" width="1" height="1"/>
<rect x="752" y="406" width="1" height="1"/>
<rect x="752" y="440" width="1" height="1"/>
<rect x="752" y="474" width="1" height="1"/>
<rect x="752" y="508" width="1" height="1"/>
<rect x="752" y="542" width="1" height="1"/>
<rect x="752" y="576" width="1" height="1"/>
<rect x="752" y="610" width="1" height="1"/>
<rect x="752" y="644" width="1" height="1"/>
<rect x="752" y="678" width="1" height="1"/>
<rect x="752" y="712" width="1" height="1"/>
<rect x="786" y="168" width="1" height="1"/>
<rect x="786" y="202" width="1" height="1"/>
<rect x="786" y="236" width="1" height="1"/>
<rect x="786" y="270" width="1" height="1"/>
<rect x="786" y="304" width="1" height="1"/>
<rect x="786" y="338" width="1" height="1"/>
<rect x="786" y="372" width="1" height="1"/>
<rect x="786" y="406" width="1" height="1"/>
<rect x="786" y="440" width="1" height="1"/>
<rect x="786" y="474" width="1" height="1"/>
<rect x="786" y="508" width="1" height="1"/>
<rect x="786" y="542" width="1" height="1"/>
<rect x="786" y="576" width="1" height="1"/>
<rect x="786" y="610" width="1" height="1"/>
<rect x="786" y="644" width="1" height="1"/>
<rect x="786" y="678" width="1" height="1"/>
<rect x="786" y="712" width="1" height="1"/>
<rect x="820" y="168" width="1" height="1"/>
<rect x="820" y="202" width="1" height="1"/>
<rect x="820" y="236" width="1" height="1"/>
<rect x="820" y="270" width="1" height="1"/>
<rect x="820" y="304" width="1" height="1"/>
<rect x="820" y="338" width="1" height="1"/>
<rect x="820" y="372" width="1" height="1"/>
<rect x="820" y="406" width="1" height="1"/>
<rect x="820" y="440" width="1" height="1"/>
<rect x="820" y="474" width="1" height="1"/>
<rect x="820" y="508" width="1" height="1"/>
<rect x="820" y="542" width="1" height="1"/>
<rect x="820" y="576" width="1" height="1"/>
<rect x="820" y="610" width="1" height="1"/>
<rect x="820" y="644" width="1" height="1"/>
<rect x="820" y="678" width="1" height="1"/>
<rect x="820" y="712" width="1" height="1"/>
<rect x="855" y="168" width="1" height="1"/>
<rect x="855" y="202" width="1" height="1"/>
<rect x="855" y="236" width="1" height="1"/>
<rect x="855" y="270" width="1" height="1"/>
<rect x="855" y="304" width="1" height="1"/>
<rect x="855" y="338" width="1" height="1"/>
<rect x="855" y="372" width="1" height="1"/>
<rect x="855" y="406" width="1" height="1"/>
<rect x="855" y="440" width="1" height="1"/>
<rect x="855" y="474" width="1" height="1"/>
<rect x="855" y="508" width="1" height="1"/>
<rect x="855" y="542" width="1" height="1"/>
<rect x="855" y="576" width="1" height="1"/>
<rect x="855" y="610" width="1" height="1"/>
<rect x="855" y="644" width="1" height="1"/>
<rect x="855" y="678" width="1" height="1"/>
<rect x="855" y="712" width="1" height="1"/>
<rect x="889" y="168" width="1" height="1"/>
<rect x="889" y="202" width="1" height="1"/>
<rect x="889" y="236" width="1" height="1"/>
<rect x="889" y="270" width="1" height="1"/>
<rect x="889" y="304" width="1" height="1"/>
<rect x="889" y="338" width="1" height="1"/>
<rect x="889" y="372" width="1" height="1"/>
<rect x="889" y="406" width="1" height="1"/>
<rect x="889" y="440" width="1" height="1"/>
<rect x="889" y="474" width="1" height="1"/>
<rect x="889" y="508" width="1" height="1"/>
<rect x="889" y="542" width="1" height="1"/>
<rect x="889" y="576" width="1" height="1"/>
<rect x="889" y="610" width="1" height="1"/>
<rect x="889" y="644" width="1" height="1"/>
<rect x="889" y="678" width="1" height="1"/>
<rect x="889" y="712" width="1" height="1"/>
<rect x="923" y="168" width="1" height="1"/>
<rect x="923" y="202" width="1" height="1"/>
<rect x="923" y="236" width="1" height="1"/>
<rect x="923" y="270" width="1" height="1"/>
<rect x="923" y="304" width="1" height="1"/>
<rect x="923" y="338" width="1" height="1"/>
<rect x="923" y="372" width="1" height="1"/>
<rect x="923" y="406" width="1" height="1"/>
<rect x="923" y="440" width="1" height="1"/>
<rect x="923" y="474" width="1" height="1"/>
<rect x="923" y="508" width="1" height="1"/>
<rect x="923" y="542" width="1" height="1"/>
<rect x="923" y="576" width="1" height="1"/>
<rect x="923" y="610" width="1" height="1"/>
<rect x="923" y="644" width="1" height="1"/>
<rect x="923" y="678" width="1" height="1"/>
<rect x="923" y="712" width="1" height="1"/>
<rect x="957" y="168" width="1" height="1"/>
<rect x="957" y="202" width="1" height="1"/>
<rect x="957" y="236" width="1" height="1"/>
<rect x="957" y="270" width="1" height="1"/>
<rect x="957" y="304" width="1" height="1"/>
<rect x="957" y="338" width="1" height="1"/>
<rect x="957" y="372" width="1" height="1"/>
<rect x="957" y="406" width="1" height="1"/>
<rect x="957" y="440" width="1" height="1"/>
<rect x="957" y="474" width="1" height="1"/>
<rect x="957" y="508" width="1" height="1"/>
<rect x="957" y="542" width="1" height="1"/>
<rect x="957" y="576" width="1" height="1"/>
<rect x="957" y="610" width="1" height="1"/>
<rect x="957" y="644" width="1" height="1"/>
<rect x="957" y="678" width="1" height="1"/>
<rect x="957" y="712" width="1" height="1"/>
<rect x="991" y="168" width="1" height="1"/>
<rect x="991" y="202" width="1" height="1"/>
<rect x="991" y="236" width="1" height="1"/>
<rect x="991" y="270" width="1" height="1"/>
<rect x="991" y="304" width="1" height="1"/>
<rect x="991" y="338" width="1" height="1"/>
<rect x="991" y="372" width="1" height="1"/>
<rect x="991" y="406" width="1" height="1"/>
<rect x="991" y="440" width="1" height="1"/>
<rect x="991" y="474" width="1" height="1"/>
<rect x="991" y="508" width="1" height="1"/>
<rect x="991" y="542" width="1" height="1"/>
<rect x="991" y="576" width="1" height="1"/>
<rect x="991" y="610" width="1" height="1"/>
<rect x="991" y="644" width="1" height="1"/>
<rect x="991" y="678" width="1" height="1"/>
<rect x="991" y="712" width="1" height="1"/>
<rect x="1025" y="168" width="1" height="1"/>
<rect x="1025" y="202" width="1" height="1"/>
<rect x="1025" y="236" width="1" height="1"/>
<rect x="1025" y="270" width="1" height="1"/>
<rect x="1025" y="304" width="1" height="1"/>
<rect x="1025" y="338" width="1" height="1"/>
<rect x="1025" y="372" width="1" height="1"/>
<rect x="1025" y="406" width="1" height="1"/>
<rect x="1025" y="440" width="1" height="1"/>
<rect x="1025" y="474" width="1" height="1"/>
<rect x="1025" y="508" width="1" height="1"/>
<rect x="1025" y="542" width="1" height="1"/>
<rect x="1025" y="576" width="1" height="1"/>
<rect x="1025" y="610" width="1" height="1"/>
<rect x="1025" y="644" width="1" height="1"/>
<rect x="1025" y="678" width="1" height="1"/>
<rect x="1025" y="712" width="1" height="1"/>
<rect x="1059" y="168" width="1" height="1"/>
<rect x="1059" y="202" width="1" height="1"/>
<rect x="1059" y="236" width="1" height="1"/>
<rect x="1059" y="270" width="1" height="1"/>
<rect x="1059" y="304" width="1" height="1"/>
<rect x="1059" y="338" width="1" height="1"/>
<rect x="1059" y="372" width="1" height="1"/>
<rect x="1059" y="406" width="1" height="1"/>
<rect x="1059" y="440" width="1" height="1"/>
<rect x="1059" y="474" width="1" height="1"/>
<rect x="1059" y="508" width="1" height="1"/>
<rect x="1059" y="542" width="1" height="1"/>
<rect x="1059" y="576" width="1" height="1"/>
<rect x="1059" y="610" width="1" height="1"/>
<rect x="1059" y="644" width="1" height="1"/>
<rect x="1059" y="678" width="1" height="1"/>
<rect x="1059" y="712" width="1" height="1"/>
<rect x="1093" y="168" width="1" height="1"/>
<rect x="1093" y="202" width="1" height="1"/>
<rect x="1093" y="236" width="1" height="1"/>
<rect x="1093" y="270" width="1" height="1"/>
<rect x="1093" y="304" width="1" height="1"/>
<rect x="1093" y="338" width="1" height="1"/>
<rect x="1093" y="372" width="1" height="1"/>
<rect x="1093" y="406" width="1" height="1"/>
<rect x="1093" y="440" width="1" height="1"/>
<rect x="1093" y="474" width="1" height="1"/>
<rect x="1093" y="508" width="1" height="1"/>
<rect x="1093" y="542" width="1" height="1"/>
<rect x="1093" y="576" width="1" height="1"/>
<rect x="1093" y="610" width="1" height="1"/>
<rect x="1093" y="644" width="1" height="1"/>
<rect x="1093" y="678" width="1" height="1"/>
<rect x="1093" y="712" width="1" height="1"/>
<rect x="1127" y="168" width="1" height="1"/>
<rect x="1127" y="202" width="1" height="1"/>
<rect x="1127" y="236" width="1" height="1"/>
<rect x="1127" y="270" width="1" height="1"/>
<rect x="1127" y="304" width="1" height="1"/>
<rect x="1127" y="338" width="1" height="1"/>
<rect x="1127" y="372" width="1" height="1"/>
<rect x="1127" y="406" width="1" height="1"/>
<rect x="1127" y="440" width="1" height="1"/>
<rect x="1127" y="474" width="1" height="1"/>
<rect x="1127" y="508" width="1" height="1"/>
<rect x="1127" y="542" width="1" height="1"/>
<rect x="1127" y="576" width="1" height="1"/>
<rect x="1127" y="610" width="1" height="1"/>
<rect x="1127" y="644" width="1" height="1"/>
<rect x="1127" y="678" width="1" height="1"/>
<rect x="1127" y="712" width="1" height="1"/>
</g>
<g stroke="#a6a6a6" stroke-width="1" fill="none"><line x1="227.5" y1="323.5" x2="1005.5" y2="323.5"/><line x1="227.5" y1="345.5" x2="1005.5" y2="345.5"/><line x1="227.5" y1="358.5" x2="1005.5" y2="358.5"/><line x1="227.5" y1="367.5" x2="1005.5" y2="367.5"/><line x1="227.5" y1="376" x2="1005.5" y2="376" stroke-width="1"/><line x1="227.5" y1="323.5" x2="227.5" y2="377"/><line x1="1005.5" y1="323.5" x2="1005.5" y2="377"/><line x1="227.5" y1="394.5" x2="1005.5" y2="394.5"/><line x1="227.5" y1="416.5" x2="1005.5" y2="416.5"/><line x1="227.5" y1="394.5" x2="227.5" y2="416.5"/><line x1="1005.5" y1="394.5" x2="1005.5" y2="416.5"/><line x1="227.5" y1="419.5" x2="1005.5" y2="419.5"/><line x1="227.5" y1="441.5" x2="1005.5" y2="441.5"/><line x1="227.5" y1="419.5" x2="227.5" y2="441.5"/><line x1="1005.5" y1="419.5" x2="1005.5" y2="441.5"/><line x1="227.5" y1="445.5" x2="1005.5" y2="445.5"/><line x1="227.5" y1="467.5" x2="1005.5" y2="467.5"/><line x1="227.5" y1="445.5" x2="227.5" y2="467.5"/><line x1="1005.5" y1="445.5" x2="1005.5" y2="467.5"/><line x1="227.5" y1="470.5" x2="1005.5" y2="470.5"/><line x1="227.5" y1="492.5" x2="1005.5" y2="492.5"/><line x1="227.5" y1="470.5" x2="227.5" y2="492.5"/><line x1="1005.5" y1="470.5" x2="1005.5" y2="492.5"/><line x1="227.5" y1="496.5" x2="1005.5" y2="496.5"/><line x1="227.5" y1="518.5" x2="1005.5" y2="518.5"/><line x1="227.5" y1="496.5" x2="227.5" y2="518.5"/><line x1="1005.5" y1="496.5" x2="1005.5" y2="518.5"/><line x1="227.5" y1="521.5" x2="1005.5" y2="521.5"/><line x1="227.5" y1="563.5" x2="1005.5" y2="563.5"/><line x1="227.5" y1="521.5" x2="227.5" y2="563.5"/><line x1="1005.5" y1="521.5" x2="1005.5" y2="563.5"/><line x1="227.5" y1="543.5" x2="1005.5" y2="543.5"/><line x1="265.5" y1="377" x2="265.5" y2="394.5"/><line x1="276.5" y1="377" x2="276.5" y2="394.5"/><path d="M265.5 383.2 A5.5 5.5 0 0 0 276.5 383.2" fill="none"/><line x1="265.5" y1="416.5" x2="265.5" y2="419.5"/><line x1="276.5" y1="416.5" x2="276.5" y2="419.5"/><line x1="265.5" y1="441.5" x2="265.5" y2="445.5"/><line x1="276.5" y1="441.5" x2="276.5" y2="445.5"/><line x1="265.5" y1="467.5" x2="265.5" y2="470.5"/><line x1="276.5" y1="467.5" x2="276.5" y2="470.5"/><line x1="265.5" y1="492.5" x2="265.5" y2="496.5"/><line x1="276.5" y1="492.5" x2="276.5" y2="496.5"/><line x1="265.5" y1="518.5" x2="265.5" y2="521.5"/><line x1="276.5" y1="518.5" x2="276.5" y2="521.5"/><line x1="611.0" y1="377" x2="611.0" y2="394.5"/><line x1="622.0" y1="377" x2="622.0" y2="394.5"/><path d="M611.0 383.2 A5.5 5.5 0 0 0 622.0 383.2" fill="none"/><line x1="611.0" y1="416.5" x2="611.0" y2="419.5"/><line x1="622.0" y1="416.5" x2="622.0" y2="419.5"/><line x1="611.0" y1="441.5" x2="611.0" y2="445.5"/><line x1="622.0" y1="441.5" x2="622.0" y2="445.5"/><line x1="611.0" y1="467.5" x2="611.0" y2="470.5"/><line x1="622.0" y1="467.5" x2="622.0" y2="470.5"/><line x1="611.0" y1="492.5" x2="611.0" y2="496.5"/><line x1="622.0" y1="492.5" x2="622.0" y2="496.5"/><line x1="611.0" y1="518.5" x2="611.0" y2="521.5"/><line x1="622.0" y1="518.5" x2="622.0" y2="521.5"/><line x1="955.5" y1="377" x2="955.5" y2="394.5"/><line x1="966.5" y1="377" x2="966.5" y2="394.5"/><path d="M955.5 383.2 A5.5 5.5 0 0 0 966.5 383.2" fill="none"/><line x1="955.5" y1="416.5" x2="955.5" y2="419.5"/><line x1="966.5" y1="416.5" x2="966.5" y2="419.5"/><line x1="955.5" y1="441.5" x2="955.5" y2="445.5"/><line x1="966.5" y1="441.5" x2="966.5" y2="445.5"/><line x1="955.5" y1="467.5" x2="955.5" y2="470.5"/><line x1="966.5" y1="467.5" x2="966.5" y2="470.5"/><line x1="955.5" y1="492.5" x2="955.5" y2="496.5"/><line x1="966.5" y1="492.5" x2="966.5" y2="496.5"/><line x1="955.5" y1="518.5" x2="955.5" y2="521.5"/><line x1="966.5" y1="518.5" x2="966.5" y2="521.5"/><rect x="195" y="402.5" width="15.3" height="117" rx="5" ry="5" fill="none"/><path d="M227.5 353.5 L213.5 353.5 A15.5 15.5 0 0 0 198 369 L198 402.5 M227.5 362.5 L214 362.5 A7 7 0 0 0 207 369.5 L207 402.5" fill="none"/><line x1="210.5" y1="501.5" x2="227.5" y2="501.5"/><line x1="210.5" y1="510.5" x2="227.5" y2="510.5"/><rect x="1022.7" y="402.5" width="15.3" height="117" rx="5" ry="5" fill="none"/><path d="M1005.5 353.5 L1019.5 353.5 A15.5 15.5 0 0 1 1035 369 L1035 402.5 M1005.5 362.5 L1019 362.5 A7 7 0 0 1 1026 369.5 L1026 402.5" fill="none"/><line x1="1022.5" y1="501.5" x2="1005.5" y2="501.5"/><line x1="1022.5" y1="510.5" x2="1005.5" y2="510.5"/></g>
<g stroke="#a00000" stroke-width="1" fill="none"><line x1="616.5" y1="454" x2="616.5" y2="494"/><line x1="596" y1="474.5" x2="637" y2="474.5"/><circle cx="616.5" cy="474.5" r="5.5"/></g>
</svg>
<div class="a tk" style="left:105px;top:148px;width:1px;height:7px"></div>
<div class="a rl" style="left:85px;top:134px;width:41px">-1.5</div>
<div class="a tk" style="left:139px;top:148px;width:1px;height:7px"></div>
<div class="a rl" style="left:119px;top:134px;width:41px">-1.4</div>
<div class="a tk" style="left:173px;top:148px;width:1px;height:7px"></div>
<div class="a rl" style="left:153px;top:134px;width:41px">-1.3</div>
<div class="a tk" style="left:207px;top:148px;width:1px;height:7px"></div>
<div class="a rl" style="left:187px;top:134px;width:41px">-1.2</div>
<div class="a tk" style="left:241px;top:148px;width:1px;height:7px"></div>
<div class="a rl" style="left:221px;top:134px;width:41px">-1.1</div>
<div class="a tk" style="left:275px;top:148px;width:1px;height:7px"></div>
<div class="a rl" style="left:255px;top:134px;width:41px">-1</div>
<div class="a tk" style="left:310px;top:148px;width:1px;height:7px"></div>
<div class="a rl" style="left:290px;top:134px;width:41px">-0.9</div>
<div class="a tk" style="left:344px;top:148px;width:1px;height:7px"></div>
<div class="a rl" style="left:324px;top:134px;width:41px">-0.8</div>
<div class="a tk" style="left:378px;top:148px;width:1px;height:7px"></div>
<div class="a rl" style="left:358px;top:134px;width:41px">-0.7</div>
<div class="a tk" style="left:412px;top:148px;width:1px;height:7px"></div>
<div class="a rl" style="left:392px;top:134px;width:41px">-0.6</div>
<div class="a tk" style="left:446px;top:148px;width:1px;height:7px"></div>
<div class="a rl" style="left:426px;top:134px;width:41px">-0.5</div>
<div class="a tk" style="left:480px;top:148px;width:1px;height:7px"></div>
<div class="a rl" style="left:460px;top:134px;width:41px">-0.4</div>
<div class="a tk" style="left:514px;top:148px;width:1px;height:7px"></div>
<div class="a rl" style="left:494px;top:134px;width:41px">-0.3</div>
<div class="a tk" style="left:548px;top:148px;width:1px;height:7px"></div>
<div class="a rl" style="left:528px;top:134px;width:41px">-0.2</div>
<div class="a tk" style="left:582px;top:148px;width:1px;height:7px"></div>
<div class="a rl" style="left:562px;top:134px;width:41px">-0.1</div>
<div class="a tk" style="left:616px;top:148px;width:1px;height:7px"></div>
<div class="a rl" style="left:596px;top:134px;width:41px">0</div>
<div class="a tk" style="left:650px;top:148px;width:1px;height:7px"></div>
<div class="a rl" style="left:630px;top:134px;width:41px">0.1</div>
<div class="a tk" style="left:684px;top:148px;width:1px;height:7px"></div>
<div class="a rl" style="left:664px;top:134px;width:41px">0.2</div>
<div class="a tk" style="left:718px;top:148px;width:1px;height:7px"></div>
<div class="a rl" style="left:698px;top:134px;width:41px">0.3</div>
<div class="a tk" style="left:752px;top:148px;width:1px;height:7px"></div>
<div class="a rl" style="left:732px;top:134px;width:41px">0.4</div>
<div class="a tk" style="left:786px;top:148px;width:1px;height:7px"></div>
<div class="a rl" style="left:766px;top:134px;width:41px">0.5</div>
<div class="a tk" style="left:821px;top:148px;width:1px;height:7px"></div>
<div class="a rl" style="left:801px;top:134px;width:41px">0.6</div>
<div class="a tk" style="left:855px;top:148px;width:1px;height:7px"></div>
<div class="a rl" style="left:835px;top:134px;width:41px">0.7</div>
<div class="a tk" style="left:889px;top:148px;width:1px;height:7px"></div>
<div class="a rl" style="left:869px;top:134px;width:41px">0.8</div>
<div class="a tk" style="left:923px;top:148px;width:1px;height:7px"></div>
<div class="a rl" style="left:903px;top:134px;width:41px">0.9</div>
<div class="a tk" style="left:957px;top:148px;width:1px;height:7px"></div>
<div class="a rl" style="left:937px;top:134px;width:41px">1</div>
<div class="a tk" style="left:991px;top:148px;width:1px;height:7px"></div>
<div class="a rl" style="left:971px;top:134px;width:41px">1.1</div>
<div class="a tk" style="left:1025px;top:148px;width:1px;height:7px"></div>
<div class="a rl" style="left:1005px;top:134px;width:41px">1.2</div>
<div class="a tk" style="left:1059px;top:148px;width:1px;height:7px"></div>
<div class="a rl" style="left:1039px;top:134px;width:41px">1.3</div>
<div class="a tk" style="left:1093px;top:148px;width:1px;height:7px"></div>
<div class="a rl" style="left:1073px;top:134px;width:41px">1.4</div>
<div class="a tk" style="left:1127px;top:148px;width:1px;height:7px"></div>
<div class="a rl" style="left:1107px;top:134px;width:41px">1.5</div>
<div class="a tk" style="left:88px;top:167px;width:7px;height:1px"></div>
<div class="a rl rv" style="left:58px;top:162px;width:41px">0.9</div>
<div class="a tk" style="left:88px;top:201px;width:7px;height:1px"></div>
<div class="a rl rv" style="left:58px;top:196px;width:41px">0.8</div>
<div class="a tk" style="left:88px;top:235px;width:7px;height:1px"></div>
<div class="a rl rv" style="left:58px;top:230px;width:41px">0.7</div>
<div class="a tk" style="left:88px;top:269px;width:7px;height:1px"></div>
<div class="a rl rv" style="left:58px;top:264px;width:41px">0.6</div>
<div class="a tk" style="left:88px;top:303px;width:7px;height:1px"></div>
<div class="a rl rv" style="left:58px;top:298px;width:41px">0.5</div>
<div class="a tk" style="left:88px;top:337px;width:7px;height:1px"></div>
<div class="a rl rv" style="left:58px;top:332px;width:41px">0.4</div>
<div class="a tk" style="left:88px;top:371px;width:7px;height:1px"></div>
<div class="a rl rv" style="left:58px;top:366px;width:41px">0.3</div>
<div class="a tk" style="left:88px;top:405px;width:7px;height:1px"></div>
<div class="a rl rv" style="left:58px;top:400px;width:41px">0.2</div>
<div class="a tk" style="left:88px;top:439px;width:7px;height:1px"></div>
<div class="a rl rv" style="left:58px;top:434px;width:41px">0.1</div>
<div class="a tk" style="left:88px;top:473px;width:7px;height:1px"></div>
<div class="a rl rv" style="left:58px;top:468px;width:41px">0</div>
<div class="a tk" style="left:88px;top:508px;width:7px;height:1px"></div>
<div class="a rl rv" style="left:58px;top:503px;width:41px">-0.1</div>
<div class="a tk" style="left:88px;top:542px;width:7px;height:1px"></div>
<div class="a rl rv" style="left:58px;top:537px;width:41px">-0.2</div>
<div class="a tk" style="left:88px;top:576px;width:7px;height:1px"></div>
<div class="a rl rv" style="left:58px;top:571px;width:41px">-0.3</div>
<div class="a tk" style="left:88px;top:610px;width:7px;height:1px"></div>
<div class="a rl rv" style="left:58px;top:605px;width:41px">-0.4</div>
<div class="a tk" style="left:88px;top:644px;width:7px;height:1px"></div>
<div class="a rl rv" style="left:58px;top:639px;width:41px">-0.5</div>
<div class="a tk" style="left:88px;top:678px;width:7px;height:1px"></div>
<div class="a rl rv" style="left:58px;top:673px;width:41px">-0.6</div>
<div class="a tk" style="left:88px;top:712px;width:7px;height:1px"></div>
<div class="a rl rv" style="left:58px;top:707px;width:41px">-0.7</div>
<div class="a" style="left:1143px;top:285px;width:8px;height:316px;border-radius:4px;background:#7f7f7f"></div>
<div class="a" style="left:280px;top:737px;width:631px;height:8px;border-radius:4px;background:#7f7f7f"></div>
<div class="a" style="left:1096px;top:733px;width:58px;height:14px;background:#ebebeb"></div>
<div class="a" style="left:1096px;top:732px;width:57px;font-size:12px;color:#111;text-align:right;line-height:16px">0.1 &lt; 1</div>
<div id="hist" class="a"></div>
<div class="a" style="left:77px;top:750px;font-size:13.4px;color:#1515d0;line-height:16px;white-space:nowrap"><i>Kommando:</i> blockedit</div>
<div class="a" style="left:1144px;top:750px;width:7px;height:18px;border-radius:0 0 4px 4px;background:#7f7f7f"></div>
<div id="cmd" class="a"></div>
<div class="a" style="left:73px;top:778px;font-size:13px;color:#111;line-height:16px">Kommando:</div>
<div class="a" style="left:148px;top:776px;width:980px;height:18px;background:#fff"></div>
<div class="a" style="left:1127px;top:772px;width:26px;height:26px;border:1px solid #c4c4c4;background:linear-gradient(#e8e8e8,#f2f2f2)"></div>
<svg class="a" style="left:1132px;top:779px" width="16" height="12" viewBox="0 0 16 12">
<rect x="0.5" y="0.5" width="14" height="10" fill="#eee" stroke="#333" stroke-width="1"/>
<rect x="0.5" y="0.5" width="14" height="2.6" fill="#000"/>
<rect x="11" y="1.2" width="1.2" height="1" fill="#fff"/>
</svg>

<div id="status" class="a"></div>
<div class="a st" style="left:2px;top:807px">47.0937,12.7851</div>
<div class="a st" style="left:2px;top:827px">@47.0937,12.7851</div>
<div class="a" style="left:253px;top:802px;width:1px;height:40px;background:#7a7a7a"></div>
<div class="a" style="left:254px;top:802px;width:1px;height:40px;background:#f4f4f4"></div>
<div class="a st" style="left:256px;top:807px">48.7984&lt;15°</div>
<div class="a st" style="left:256px;top:827px">@48.7984&lt;15°</div>
<div class="a" style="left:506px;top:819px;width:6px;height:6px;border-radius:3px;background:#c6c6c6"></div>
<div class="a st" style="left:549px;top:817px;">Element oder Bereich selektieren</div>
<svg class="a" style="left:716px;top:805px" width="20" height="32" viewBox="0 0 20 32">
<path d="M1.5 10 A8.5 8.5 0 0 1 18.5 10 L18.5 22 A8.5 8.5 0 0 1 1.5 22 Z" fill="#fff" stroke="#555" stroke-width="1"/>
<path d="M1.5 15.5 Q10 12.5 18.5 15.5" fill="none" stroke="#444" stroke-width="1.6"/>
<line x1="10" y1="1.5" x2="10" y2="14" stroke="#444" stroke-width="1.5"/>
<rect x="8" y="4" width="4" height="7.5" rx="1.5" fill="#fff" stroke="#444" stroke-width="1"/>
</svg>
<div class="a" style="left:939px;top:819px;width:6px;height:6px;border-radius:3px;background:#c6c6c6"></div>
<div class="a st" style="left:949px;top:817px">Keine Objekte selektiert.</div>
<div class="a" style="left:1269px;top:819px;width:6px;height:6px;border-radius:3px;background:#c6c6c6"></div>

<div id="dock" class="a"></div>
<svg width="0" height="0" style="position:absolute">
<defs>
<symbol id="eye" viewBox="0 0 16 12">
<path d="M0.2 6.3 C2.5 0.1 13.5 -0.4 15.8 5.8 C13.8 12.2 2.5 12.4 0.2 6.3Z" fill="#000"/>
<path d="M2.4 6.0 C4.5 3.5 11.5 3.3 13.6 5.8 C12.2 10.6 3.8 10.8 2.4 6.0Z" fill="#fff"/>
<circle cx="8" cy="5.6" r="3.1" fill="#000"/>
<circle cx="7.1" cy="4.6" r="0.9" fill="#8a8a8a"/>
</symbol>
<symbol id="lock" viewBox="0 0 12 16">
<path d="M2.8 7.5 V5 A3.2 3.2 0 0 1 9.2 5 V7.5" fill="none" stroke="#b8b8b8" stroke-width="1.6"/>
<rect x="1" y="7.2" width="10" height="8" rx="1" fill="#b8b8b8"/>
</symbol>
<symbol id="pencil" viewBox="0 0 20 20">
<path d="M2 18 L3.3 13.7 L14.6 2.4 L17.6 5.4 L6.3 16.7 Z" fill="#e2b866" stroke="#8a6a30" stroke-width="0.7"/>
<path d="M14.6 2.4 L16 1 A1.6 1.6 0 0 1 19 4 L17.6 5.4 Z" fill="#e8607a"/>
<path d="M2 18 L3.3 13.7 L6.3 16.7 Z" fill="#f2dcb0"/>
<path d="M2 18 L2.6 16.2 L3.8 17.4Z" fill="#444"/>
</symbol>
<symbol id="eyet" viewBox="0 0 16 12">
<path d="M0.2 6.3 C2.5 0.1 13.5 -0.4 15.8 5.8 C13.8 12.2 2.5 12.4 0.2 6.3Z M2.4 6.0 C3.8 9.8 12.2 10.6 13.6 5.8 C11.5 3.3 4.5 3.5 2.4 6.0Z" fill="#1e2a44" fill-rule="evenodd"/>
<circle cx="8" cy="5.6" r="3.1" fill="#1e2a44"/>
</symbol>
</defs>
</svg>
<!-- Blockliste -->
<div class="a ptitle" style="left:1155px;top:108px;width:300px;height:22px"></div>
<div class="a pt" style="left:1272px;top:112px;width:100px">Blockliste</div>
<div class="a cb" style="left:1157px;top:111px"></div>
<div class="a cb" style="left:1175px;top:111px"></div>
<svg class="a" style="left:1157px;top:111px" width="32" height="14" viewBox="0 0 32 14">
<path d="M4.2 4.2 L9.8 9.8 M9.8 4.2 L4.2 9.8" stroke="#fff" stroke-width="1.8"/>
<path d="M21.5 5.5 V3.5 H28 V8.5 H26.5" fill="none" stroke="#fff" stroke-width="1.2"/>
<rect x="19.5" y="5.8" width="6.5" height="4.8" fill="#6c6c6c" stroke="#fff" stroke-width="1.2"/>
</svg>
<div class="a" style="left:1155px;top:130px;width:300px;height:27px;background:#b8b8b8"></div>
<div class="a pb" style="left:1155px;top:130px;width:38px;height:27px"></div>
<div class="a pb" style="left:1193px;top:130px;width:37px;height:27px"></div>
<div class="a pb" style="left:1230px;top:130px;width:38px;height:27px"></div>
<div class="a pb" style="left:1268px;top:130px;width:37px;height:27px"></div>
<div class="a pb" style="left:1305px;top:130px;width:38px;height:27px"></div>
<div class="a pb" style="left:1343px;top:130px;width:37px;height:27px"></div>
<div class="a pb" style="left:1380px;top:130px;width:38px;height:27px"></div>
<div class="a pb" style="left:1418px;top:130px;width:37px;height:27px"></div>
<svg class="a" style="left:1166px;top:137px" width="16" height="12"><use href="#eye"/></svg>
<svg class="a" style="left:1203px;top:137px" width="16" height="12" opacity="0.35"><use href="#eye"/></svg>
<svg class="a" style="left:1241px;top:136px" width="14" height="14" viewBox="0 0 14 14"><path d="M5.6 1H8.4V5.6H13V8.4H8.4V13H5.6V8.4H1V5.6H5.6Z" fill="#f00000" stroke="#7a0000" stroke-width="0.5"/></svg>
<svg class="a" style="left:1279px;top:136px" width="14" height="14" viewBox="0 0 14 14"><rect x="1" y="5.6" width="12" height="2.8" fill="#f00000" stroke="#7a0000" stroke-width="0.5"/></svg>
<div class="a" style="left:1309px;top:134px;width:30px;font-size:13px;color:#111;text-align:center;line-height:18px">a<span style="display:inline-block;width:1px;height:15px;background:#111;vertical-align:-3px;margin:0 1px"></span>b</div>
<svg class="a" style="left:1352px;top:134px" width="18" height="18"><use href="#pencil"/></svg>
<svg class="a" style="left:1392px;top:135px" width="14" height="16" viewBox="0 0 14 16"><rect x="0.5" y="0.5" width="13" height="15" fill="#e8eaf0" stroke="#d0d4dc"/><path d="M5 3 Q9 3 9 7 L9 10 L11 10 L8 13.5 L5 10 L7 10 L7 7 Q7 5 5 5Z" fill="#8ab0ec"/></svg>
<svg class="a" style="left:1429px;top:136px" width="14" height="14" viewBox="0 0 14 14"><rect x="0.5" y="0.5" width="13" height="13" fill="#e8663c" stroke="#d44" stroke-width="1"/><path d="M4 4L10 10M10 4L4 10" stroke="#fff" stroke-width="2"/></svg>
<div class="a" style="left:1155px;top:157px;width:300px;height:151px;background:#fff;border-left:1px solid #c4c4c4;border-bottom:1px solid #b8b8b8"></div>
<div class="a" style="left:1156px;top:197px;width:298px;height:20px;background:#d4d4d4"></div>
<!-- cursor highlight ring -->
<div class="a" style="left:1148px;top:166px;width:78px;height:78px;border-radius:50%;border:5px solid rgba(160,185,205,0.5);box-shadow:inset 0 0 2px 1px rgba(170,190,210,0.45),0 0 2px 1px rgba(170,190,210,0.35)"></div>
<svg class="a" style="left:1161px;top:161px" width="16" height="12"><use href="#eye"/></svg>
<svg class="a" style="left:1161px;top:181px" width="16" height="12"><use href="#eye"/></svg>
<svg class="a" style="left:1161px;top:201px" width="16" height="12" opacity="0.8"><use href="#eye"/></svg>
<svg class="a" style="left:1161px;top:221px" width="16" height="12"><use href="#eye"/></svg>
<svg class="a" style="left:1161px;top:241px" width="16" height="12"><use href="#eye"/></svg>
<svg class="a" style="left:1161px;top:261px" width="16" height="12"><use href="#eye"/></svg>
<div class="a li" style="left:1205px;top:159px">Model (*Model_Space)</div>
<div class="a li" style="left:1205px;top:179px">Layout1 (*Paper_Space)</div>
<div class="a li" style="left:1205px;top:199px">Bank</div>
<div class="a li" style="left:1205px;top:219px">Baum A</div>
<div class="a li" style="left:1205px;top:239px">Baum B</div>
<div class="a li" style="left:1205px;top:259px">Mülleimer</div>
<svg class="a" style="left:1185px;top:200px" width="14" height="14"><use href="#pencil"/></svg>

<svg class="a" style="left:1186px;top:203px" width="18" height="32" viewBox="0 0 18 32"><path d="M1.5 1.5 L1.5 23 L6.5 18.5 L10.5 28.3 L13.8 26.9 L9.8 17.4 L16.3 17.1 Z" fill="#fff" stroke="#111" stroke-width="1.1" stroke-linejoin="round"/></svg>
<!-- Layerliste -->
<div class="a ptitle" style="left:1155px;top:308px;width:300px;height:23px"></div>
<div class="a pt" style="left:1272px;top:313px;width:100px">Layerliste</div>
<div class="a cb" style="left:1157px;top:312px"></div>
<div class="a cb" style="left:1175px;top:312px"></div>
<svg class="a" style="left:1157px;top:312px" width="32" height="14" viewBox="0 0 32 14">
<path d="M4.2 4.2 L9.8 9.8 M9.8 4.2 L4.2 9.8" stroke="#fff" stroke-width="1.8"/>
<path d="M21.5 5.5 V3.5 H28 V8.5 H26.5" fill="none" stroke="#fff" stroke-width="1.2"/>
<rect x="19.5" y="5.8" width="6.5" height="4.8" fill="#6c6c6c" stroke="#fff" stroke-width="1.2"/>
</svg>
<div class="a" style="left:1155px;top:331px;width:300px;height:26px;background:#b8b8b8"></div>
<div class="a pb" style="left:1155px;top:331px;width:60px;height:26px"></div>
<div class="a pb" style="left:1215px;top:331px;width:60px;height:26px"></div>
<div class="a pb" style="left:1275px;top:331px;width:60px;height:26px"></div>
<div class="a pb" style="left:1335px;top:331px;width:60px;height:26px"></div>
<div class="a pb" style="left:1395px;top:331px;width:60px;height:26px"></div>
<svg class="a" style="left:1177px;top:338px" width="16" height="12"><use href="#eye"/></svg>
<svg class="a" style="left:1237px;top:338px" width="16" height="12" opacity="0.35"><use href="#eye"/></svg>
<svg class="a" style="left:1297px;top:337px" width="14" height="14" viewBox="0 0 14 14"><path d="M5.6 1H8.4V5.6H13V8.4H8.4V13H5.6V8.4H1V5.6H5.6Z" fill="#f00000" stroke="#7a0000" stroke-width="0.5"/></svg>
<svg class="a" style="left:1357px;top:337px" width="14" height="14" viewBox="0 0 14 14"><rect x="1" y="5.6" width="12" height="2.8" fill="#f00000" stroke="#7a0000" stroke-width="0.5"/></svg>
<svg class="a" style="left:1416px;top:335px" width="18" height="18"><use href="#pencil"/></svg>
<div class="a" style="left:1155px;top:357px;width:300px;height:441px;background:#fff;border-left:1px solid #c4c4c4;border-right:1px solid #d8d8d8"></div>
<div class="a" style="left:1156px;top:418px;width:298px;height:20px;background:#0a50d8"></div>
<div class="a" style="left:1161px;top:364px;width:16px;height:9px;border:1px solid #111;background:#fff"></div>
<div class="a" style="left:1161px;top:384px;width:16px;height:9px;border:1px solid #111;background:#c2c2c2"></div>
<div class="a" style="left:1161px;top:404px;width:16px;height:9px;border:1px solid #111;background:#6a9c34"></div>
<div class="a" style="left:1161px;top:424px;width:16px;height:9px;border:1px solid #222;background:#c6b68c"></div>
<div class="a li" style="left:1183px;top:360px">0</div>
<div class="a li" style="left:1183px;top:380px">Anlagen</div>
<div class="a li" style="left:1183px;top:400px">Pflanzen</div>
<div class="a li" style="left:1183px;top:420px;color:#fff">Wege</div>
<svg class="a" style="left:1415px;top:362px" width="16" height="12"><use href="#eye"/></svg>
<svg class="a" style="left:1415px;top:382px" width="16" height="12"><use href="#eye"/></svg>
<svg class="a" style="left:1415px;top:402px" width="16" height="12"><use href="#eye"/></svg>
<svg class="a" style="left:1415px;top:422px" width="16" height="12"><use href="#eyet"/></svg>
<svg class="a" style="left:1439px;top:360px" width="12" height="16"><use href="#lock"/></svg>
<svg class="a" style="left:1439px;top:380px" width="12" height="16"><use href="#lock"/></svg>
<svg class="a" style="left:1439px;top:400px" width="12" height="16"><use href="#lock"/></svg>
<svg class="a" style="left:1439px;top:420px" width="12" height="16"><use href="#lock"/></svg>
<svg class="a" style="left:1393px;top:420px" width="16" height="16"><use href="#pencil"/></svg>

<div id="rtb" class="a"></div>
<div class="a" style="left:1462px;top:116px;width:28px;height:2px;background:repeating-linear-gradient(90deg,#a4a4a4 0 2px,transparent 2px 5.3px)"></div>
<div class="a tbb" style="left:1456px;top:120px;width:42px;height:43px"></div>
<div class="a tbb" style="left:1456px;top:167px;width:42px;height:43px"></div>
<div class="a tbb" style="left:1456px;top:419px;width:42px;height:41px"></div>
<div class="a" style="left:1462px;top:262px;width:28px;height:2px;background:repeating-linear-gradient(90deg,#a4a4a4 0 2px,transparent 2px 5.3px)"></div>
<div class="a" style="left:1462px;top:410px;width:28px;height:2px;background:repeating-linear-gradient(90deg,#a4a4a4 0 2px,transparent 2px 5.3px)"></div>
<svg width="0" height="0" style="position:absolute"><defs>
<symbol id="win" viewBox="0 0 28 28">
<rect x="0.5" y="0.5" width="27" height="27" fill="#fff" stroke="#222" stroke-width="1"/>
<rect x="0.5" y="0.5" width="27" height="4.5" fill="#000"/>
<rect x="1.5" y="1.2" width="3" height="3" fill="#fff"/>
</symbol></defs></svg>
<svg class="a" style="left:1463px;top:127px" width="28" height="28" viewBox="0 0 28 28"><use href="#win"/>
<path d="M8 12 L11 10 L11 21 L8 23Z" fill="#999" stroke="#444" stroke-width="0.7"/><path d="M11 10 L20 7 L20 18 L11 21Z" fill="#e4e4e4" stroke="#444" stroke-width="0.7"/><path d="M13 18 L17 9 L18 17Z" fill="none" stroke="#e03030" stroke-width="0.9"/></svg>
<svg class="a" style="left:1463px;top:174px" width="28" height="28" viewBox="0 0 28 28"><use href="#win"/>
<rect x="7" y="9" width="11" height="9" fill="#f0e8c8" stroke="#666" stroke-width="0.8"/><circle cx="17" cy="17.5" r="4.5" fill="#efe4b8" stroke="#666" stroke-width="0.8"/></svg>
<svg class="a" style="left:1463px;top:221px" width="28" height="28" viewBox="0 0 28 28"><use href="#win"/>
<rect x="6.5" y="10" width="15" height="10" rx="2" fill="#f4f4f4" stroke="#b8c8e0" stroke-width="0.9"/></svg>
<svg class="a" style="left:1463px;top:277px" width="28" height="28" viewBox="0 0 28 28"><use href="#win"/>
<rect x="4" y="9" width="4" height="3" fill="#111"/><rect x="4" y="15" width="4" height="3" fill="#111"/><rect x="4" y="21" width="4" height="3" fill="#111"/>
<rect x="10" y="9" width="14" height="3" fill="none" stroke="#333" stroke-width="0.8"/><rect x="10" y="15" width="14" height="3" fill="none" stroke="#333" stroke-width="0.8"/><rect x="10" y="21" width="14" height="3" fill="none" stroke="#333" stroke-width="0.8"/></svg>
<svg class="a" style="left:1463px;top:323px" width="28" height="28" viewBox="0 0 28 28"><use href="#win"/>
<path d="M6 9 L22 9 L16 16 L16 23 L12 21 L12 16Z" fill="#bbb" stroke="#555" stroke-width="0.8"/></svg>
<svg class="a" style="left:1463px;top:368px" width="28" height="28" viewBox="0 0 28 28"><use href="#win"/>
<path d="M5 9 L12 13 L12 19 L5 23Z" fill="#fff" stroke="#333" stroke-width="0.8"/><rect x="12" y="12" width="9" height="8" fill="#999" stroke="#555" stroke-width="0.6"/><line x1="3" y1="16" x2="25" y2="16" stroke="#e05050" stroke-width="0.6" stroke-dasharray="1.5 1"/></svg>
<svg class="a" style="left:1463px;top:425px" width="28" height="28" viewBox="0 0 28 28"><use href="#win"/>
<g stroke="#888" stroke-width="0.8"><line x1="3" y1="9" x2="13" y2="9"/><line x1="3" y1="12" x2="12" y2="12"/><line x1="3" y1="15" x2="14" y2="15"/><line x1="3" y1="18" x2="14" y2="18"/></g><line x1="1" y1="22" x2="27" y2="22" stroke="#444" stroke-width="0.6"/><g stroke="#333" stroke-width="0.6"><line x1="3" y1="25" x2="6" y2="25"/><line x1="11" y1="25" x2="25" y2="25"/></g></svg>
<svg class="a" style="left:1463px;top:472px" width="28" height="28" viewBox="0 0 28 28"><use href="#win"/>
<rect x="7" y="9" width="14" height="16" rx="1" fill="#c8903c" stroke="#8a5a1a" stroke-width="0.7"/><rect x="9" y="11" width="10" height="12" fill="#f4f4f4"/><rect x="11" y="7.5" width="6" height="3" rx="1" fill="#aaa" stroke="#555" stroke-width="0.5"/><g stroke="#aaa" stroke-width="0.6"><line x1="10" y1="14" x2="18" y2="14"/><line x1="10" y1="17" x2="18" y2="17"/><line x1="10" y1="20" x2="16" y2="20"/></g></svg>

</body></html>
